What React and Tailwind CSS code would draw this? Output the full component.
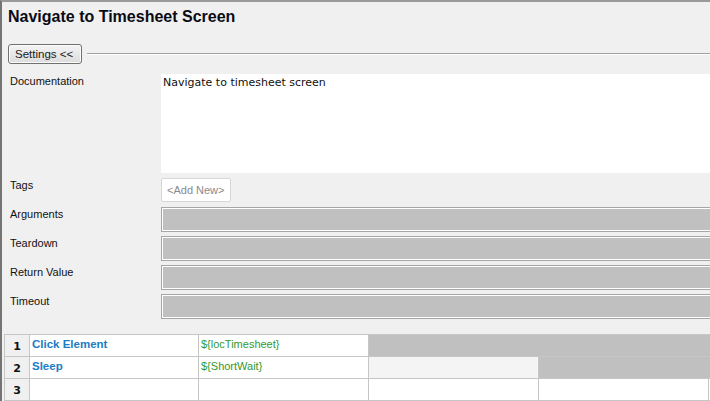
const labelCls = "w-[159px] shrink-0 pl-[8px] leading-[14px] text-[11px] text-[#111]";

const Field = ({ label, mt }) => (
  <div className={`flex h-[25px] ${mt}`}>
    <div className={labelCls}>{label}</div>
    <div className="flex-1 overflow-hidden">
      <div className="w-[570px] h-full border border-[#a6a6a6] bg-[#c0c0c0] shadow-[inset_0_0_0_1px_#ffffff]" />
    </div>
  </div>
);

const rows = [
  { n: "1", kw: "Click Element", arg: "${locTimesheet}" },
  { n: "2", kw: "Sleep", arg: "${ShortWait}" },
  { n: "3", kw: "", arg: "" },
];

const cellBase = "h-full border-r shrink-0";

const App = () => {
  return (
    <div
      className="w-[710px] h-[401px] overflow-hidden bg-[#f0f0f0] border-l-2 border-l-[#747474] border-t-2 border-t-[#9a9a9a]"
      style={{ fontFamily: '"Liberation Sans", Arial, sans-serif' }}
    >
      <div className="pl-[6px] pt-[6px] text-[16px] leading-[18px] font-bold text-[#0b0b14]">
        Navigate to Timesheet Screen
      </div>

      <div className="flex items-center mt-[18px] h-[20px]">
        <button className="ml-[6px] h-[20px] w-[74px] rounded-[3px] border border-[#707070] bg-gradient-to-b from-[#f4f4f4] to-[#dcdcdc] shadow-[inset_0_0_0_1px_#fbfbfb] text-[11.5px] leading-[14px] text-[#1a1a1a] text-left pl-[6px]">
          Settings &lt;&lt;
        </button>
        <div className="flex-1 ml-[5px] mt-[-1px] border-t border-t-[#a0a0a0] border-b border-b-white" />
      </div>

      <div className="flex h-[99px] mt-[10px]">
        <div className={labelCls}>Documentation</div>
        <div
          className="flex-1 bg-white pl-[2px] pt-[2px] text-[11px] leading-[14px] text-[#111]"
          style={{ fontFamily: '"DejaVu Sans", Verdana, sans-serif' }}
        >
          Navigate to timesheet screen
        </div>
      </div>

      <div className="flex h-[24px] mt-[5px]">
        <div className={labelCls}>Tags</div>
        <div className="w-[70px] h-full bg-white border border-[#d6d6d6] rounded-[2px] pl-[5px] pt-[4px] text-[11px] leading-[14px] text-[#8a8a8a]">
          &lt;Add New&gt;
        </div>
      </div>

      <Field label="Arguments" mt="mt-[5px]" />
      <Field label="Teardown" mt="mt-[4px]" />
      <Field label="Return Value" mt="mt-[4px]" />
      <Field label="Timeout" mt="mt-[4px]" />

      <div className="ml-[2px] mt-[15px] border-t border-l border-[#c6c6c6] text-[11px] leading-[14px]">
        {rows.map((r, i) => (
          <div key={r.n} className="flex h-[22px] border-b border-[#c6c6c6]">
            <div
              className={`${cellBase} w-[25px] border-[#c6c6c6] bg-[#f0f0f0] flex items-center justify-center font-bold text-[#111] pt-[2px]`}
              style={{ fontFamily: '"DejaVu Sans", Tahoma, sans-serif' }}
            >
              {r.n}
            </div>
            <div className={`${cellBase} w-[169px] border-[#c6c6c6] bg-white pl-[2px] pt-[2px] font-bold text-[11.5px] text-[#1c7cc4]`}>
              {r.kw}
            </div>
            <div className={`${cellBase} w-[170px] border-[#c6c6c6] bg-white pl-[2px] pt-[2px] text-[#33992f]`}>
              {r.arg}
            </div>
            {i === 0 && (
              <>
                <div className={`${cellBase} w-[170px] border-[#c0c0c0] bg-[#c0c0c0]`} />
                <div className={`${cellBase} w-[170px] border-[#c0c0c0] bg-[#c0c0c0]`} />
                <div className="h-full flex-1 bg-[#c0c0c0]" />
              </>
            )}
            {i === 1 && (
              <>
                <div className={`${cellBase} w-[170px] border-[#c6c6c6] bg-[#f4f4f4]`} />
                <div className={`${cellBase} w-[170px] border-[#c0c0c0] bg-[#c0c0c0]`} />
                <div className="h-full flex-1 bg-[#c0c0c0]" />
              </>
            )}
            {i === 2 && (
              <>
                <div className={`${cellBase} w-[170px] border-[#c6c6c6] bg-white`} />
                <div className={`${cellBase} w-[170px] border-[#c6c6c6] bg-white`} />
                <div className="h-full flex-1 bg-white" />
              </>
            )}
          </div>
        ))}
      </div>
    </div>
  );
};

export default App;
